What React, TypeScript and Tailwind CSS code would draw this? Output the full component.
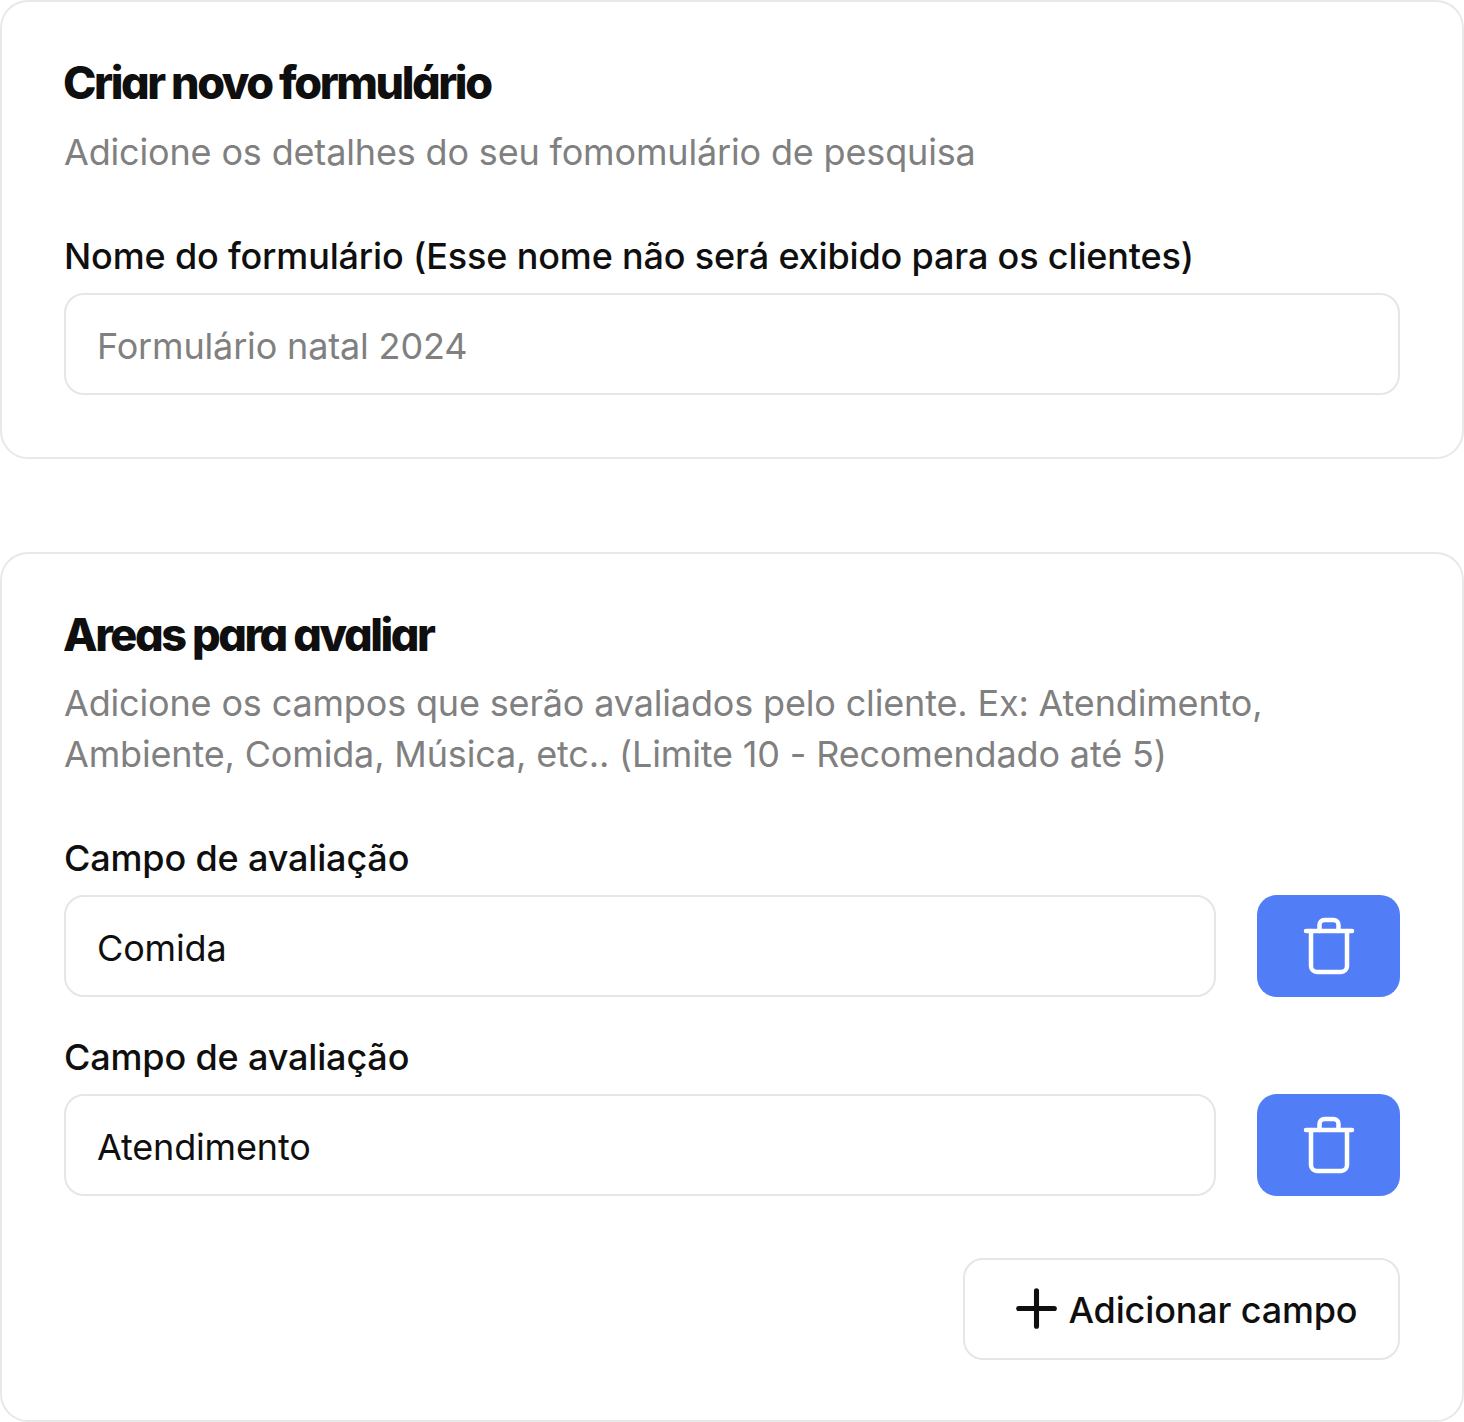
import { Plus } from 'lucide-react';

function TrashIcon() {
  return (
    <svg width="52" height="58" viewBox="0 0 52 58" fill="none" stroke="white" strokeWidth="4.5" strokeLinecap="round" strokeLinejoin="round">
      <path d="M3 14h46" />
      <path d="M16.500 14V8a5 5 0 0 1 5-5h9a5 5 0 0 1 5 5v6" />
      <path d="M8 14v35a6 6 0 0 0 6 6h24a6 6 0 0 0 6-6V14" />
    </svg>
  );
}

function Field({ label, value }: { label: string; value: string }) {
  return (
    <div>
      <label className="block text-[36px] leading-[50px] font-medium text-[#0f0f0f] tracking-[-0.16px]">{label}</label>
      <div className="flex gap-[41px] mt-[12px]">
        <div className="flex-1 h-[102px] flex items-center px-[31px] pt-[3px] border-2 border-[#e6e6e6] rounded-[20px] text-[36px] text-[#0f0f0f] tracking-[-0.16px]">
          {value}
        </div>
        <button className="w-[143px] h-[102px] flex items-center justify-center rounded-[20px] bg-[#517df6]">
          <TrashIcon />
        </button>
      </div>
    </div>
  );
}

export default function App() {
  return (
    <div className="w-[1464px] h-[1422px] bg-white font-['Inter',sans-serif] flex flex-col gap-[93px]">
      <section className="h-[459px] border-2 border-[#e8e8e8] rounded-[28px] px-[62px] pt-[53px]">
        <h2 className="text-[45px] leading-[56px] font-extrabold text-[#0f0f0f] tracking-[-2.45px] -ml-[1px] [font-feature-settings:'cv11']">Criar novo formulário</h2>
        <p className="text-[36px] leading-[51px] text-[#808080] mt-[16px] tracking-[-0.16px]">
          Adicione os detalhes do seu fomomulário de pesquisa
        </p>
        <label className="block text-[36px] leading-[50px] font-medium text-[#0f0f0f] mt-[53px] tracking-[-0.16px]">
          Nome do formulário (Esse nome não será exibido para os clientes)
        </label>
        <div className="h-[102px] mt-[12px] flex items-center px-[31px] pt-[3px] border-2 border-[#e6e6e6] rounded-[20px] text-[36px] text-[#808080] tracking-[-0.16px]">
          Formulário natal 2024
        </div>
      </section>

      <section className="flex-1 border-2 border-[#e8e8e8] rounded-[28px] px-[62px] pt-[53px]">
        <h2 className="text-[45px] leading-[56px] font-extrabold text-[#0f0f0f] tracking-[-2.45px] -ml-[1px] [font-feature-settings:'cv11']">Areas para avaliar</h2>
        <p className="text-[36px] leading-[51px] text-[#808080] mt-[15px] tracking-[-0.16px]">
          Adicione os campos que serão avaliados pelo cliente. Ex: Atendimento,
          <br />
          Ambiente, Comida, Música, etc.. (Limite 10 - Recomendado até 5)
        </p>
        <div className="mt-[53px] flex flex-col gap-[35px]">
          <Field label="Campo de avaliação" value="Comida" />
          <Field label="Campo de avaliação" value="Atendimento" />
        </div>
        <div className="flex justify-end mt-[62px]">
          <button className="w-[437px] h-[102px] flex items-center justify-center gap-[2px] pt-[2px] border-2 border-[#e6e6e6] rounded-[20px] text-[36px] font-medium text-[#0f0f0f] tracking-[-0.16px]">
            <Plus size={61} strokeWidth={2} className="-mt-[3px]" />
            Adicionar campo
          </button>
        </div>
      </section>
    </div>
  );
}
